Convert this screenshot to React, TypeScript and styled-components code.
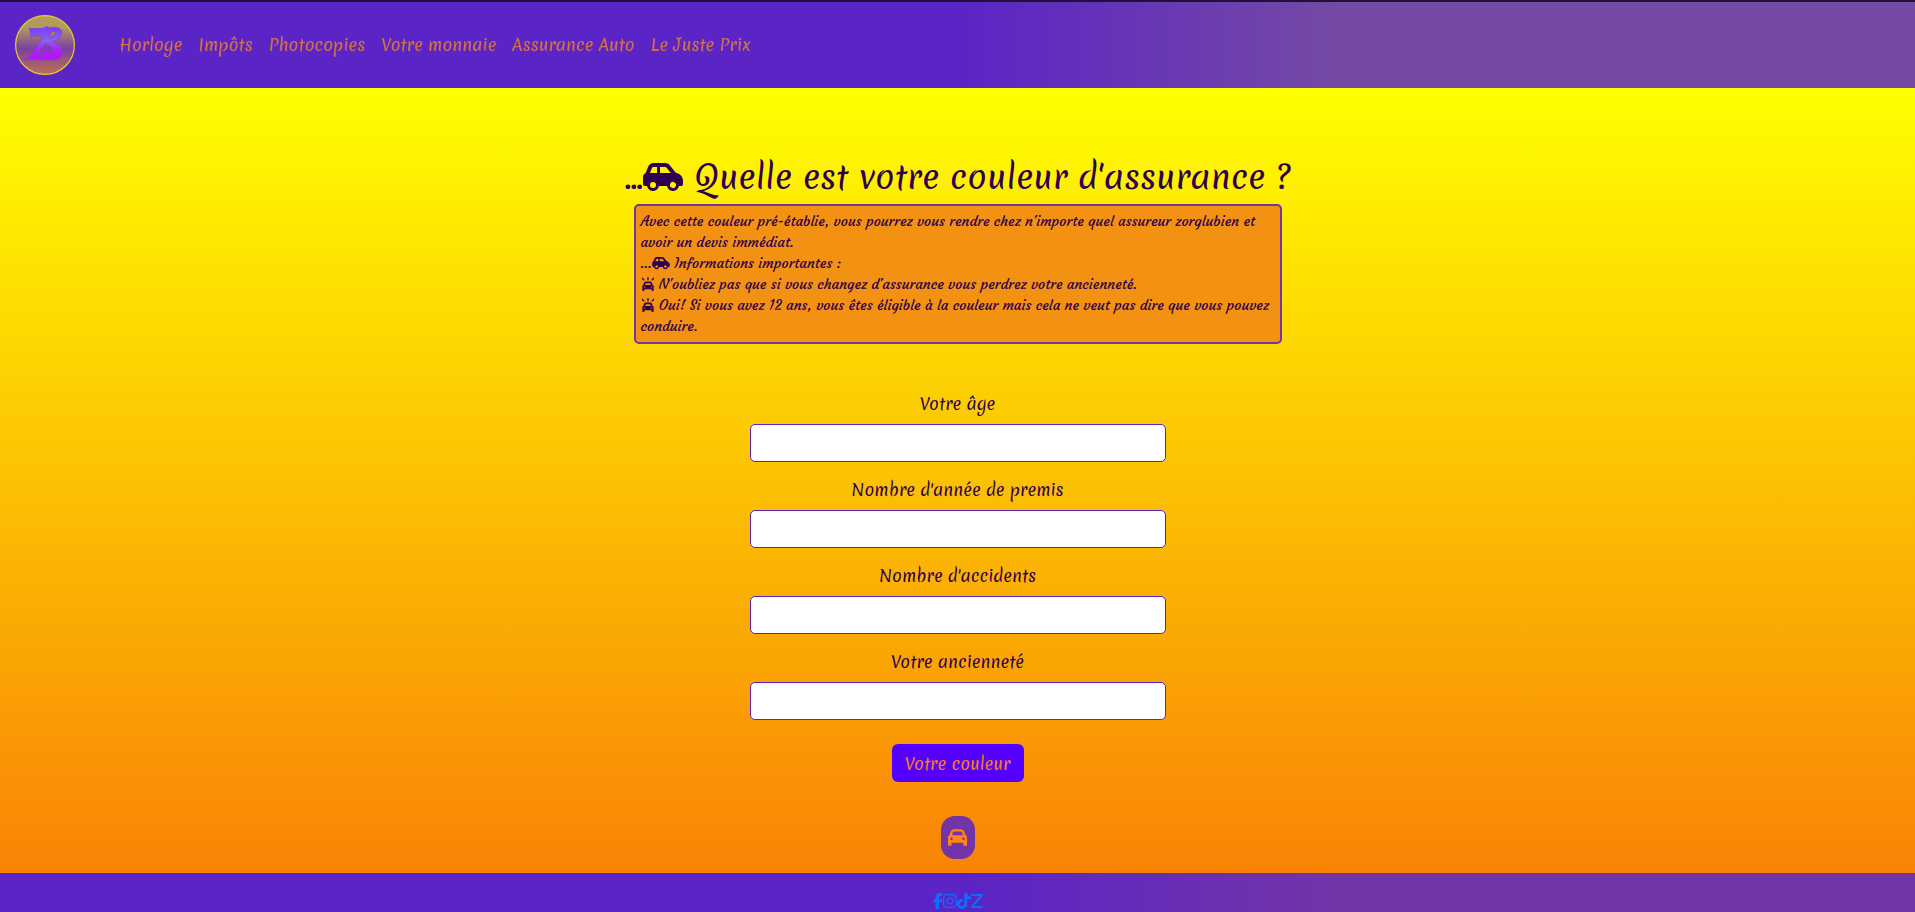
import React from "react";
import styled, { createGlobalStyle } from "styled-components";
import { FaCar, FaCarSide, FaCarOn, FaFacebookF, FaInstagram, FaTiktok, FaZ } from "react-icons/fa6";

const displayFont = `Merienda, "Open Sans", "Noto Sans", sans-serif`;
const bodyFont = `Courgette, Merienda, "Open Sans", sans-serif`;

const GlobalStyle = createGlobalStyle`
  * { box-sizing: border-box; }
  body { margin: 0; background: #5a24c6; color: #2e004f; font-family: ${displayFont}; }
`;

const Page = styled.div`
  min-height: 100vh;
  display: flex;
  flex-direction: column;
`;

const Header = styled.header`
  display: flex;
  align-items: center;
  gap: 44px;
  height: 88px;
  padding: 0 15px;
  border-top: 2px solid #22103a;
  background: linear-gradient(90deg, #5a24c6 50%, #744aa4 70%);
`;

const LogoLink = styled.a`
  display: block;
  line-height: 0;
`;

const Nav = styled.nav`
  display: flex;
  gap: 16px;
`;

const NavLink = styled.a`
  color: #d27341;
  font-size: 16px;
  line-height: 28px;
  text-decoration: none;
  white-space: nowrap;
`;

const Main = styled.main`
  flex: 1;
  display: flex;
  flex-direction: column;
  align-items: center;
  padding: 65px 16px 14px;
  background: linear-gradient(180deg, #ffff00, #f98306);
`;

const Title = styled.h1`
  margin: 0;
  padding-bottom: 3px;
  font-size: 32px;
  line-height: 48px;
  font-weight: 400;
  text-align: center;
  svg { width: 40px; height: 32px; vertical-align: -4px; }
`;

const Info = styled.section`
  width: 648px;
  max-width: 100%;
  min-height: 140px;
  padding: 5px;
  border: 2px solid #7334a8;
  border-radius: 5px;
  background: #f39212;
  font-family: ${bodyFont};
  font-size: 14px;
  line-height: 21px;
`;

const InfoLine = styled.p`
  margin: 0;
  svg { width: 14px; height: 14px; vertical-align: -2px; }
  svg.side { width: 18px; }
`;

const Form = styled.form`
  display: flex;
  flex-direction: column;
  align-items: center;
  width: 416px;
  max-width: 100%;
  margin-top: 46px;
`;

const Field = styled.div`
  display: flex;
  flex-direction: column;
  align-items: center;
  gap: 6px;
  width: 100%;
  margin-bottom: 14px;
`;

const Label = styled.label`
  font-size: 16px;
  line-height: 28px;
`;

const Input = styled.input`
  width: 100%;
  height: 38px;
  padding: 6px 12px;
  border: 1px solid #5a24c6;
  border-radius: 5px;
  background: #fff;
  font: inherit;
`;

const Submit = styled.button`
  width: 132px;
  height: 38px;
  margin-top: 10px;
  padding: 0;
  border: 0;
  border-radius: 6px;
  background: #5500ff;
  color: #f98306;
  font: inherit;
  font-size: 16px;
  white-space: nowrap;
`;

const Badge = styled.div`
  display: grid;
  place-items: center;
  width: 34px;
  height: 43px;
  margin-top: 34px;
  border-radius: 14px;
  background: #7334a8;
  color: #ff8412;
`;

const Footer = styled.footer`
  display: flex;
  justify-content: center;
  padding: 20px 0 3px;
  background: linear-gradient(90deg, #5a24c6 50%, #7334a8 70%);
`;

const SocialLink = styled.a<{ $width: number }>`
  display: block;
  color: #0d6efd;
  line-height: 0;
  svg { width: ${(p) => p.$width}px; height: 16px; }
`;

const Logo = () => (
  <svg width="60" height="60" viewBox="0 0 60 60" role="img" aria-label="ZB">
    <defs>
      <linearGradient id="disc" x1="0" y1="0" x2="0" y2="1">
        <stop offset="0.2" stopColor="#b39b5c" />
        <stop offset="0.56" stopColor="#7b419f" />
        <stop offset="0.95" stopColor="#b86a5a" />
      </linearGradient>
      <linearGradient id="mark" x1="0" y1="0" x2="0" y2="1">
        <stop offset="0" stopColor="#7838ff" />
        <stop offset="0.42" stopColor="#8b62f0" />
        <stop offset="0.72" stopColor="#b020ef" />
        <stop offset="1" stopColor="#b510f8" />
      </linearGradient>
    </defs>
    <circle cx="30" cy="30" r="29.4" fill="url(#disc)" stroke="#e5d027" strokeWidth="1.2" />
    <path
      fill="url(#mark)"
      stroke="#7538e8"
      strokeWidth="0.6"
      fillRule="evenodd"
      d="M14 13.200C19 14 25 13.400 30 13L31.400 11 33 12.800C39 11.500 46.500 12 46.700 17 46.700 22 42 25.500 38 26.500 43 29 47 32 47 37 47 42 43 44.500 37 44.800 28 45.200 18 43.500 9.500 45 13 43 15 41 17 38.200L28.500 21.500C24 20.500 19 20 15.200 22 16 19 15.500 16 14 13.200ZM36.500 17C35 19 34.500 21 35 23 38 22 41 19.500 40.500 17.500 39.500 16 37.500 16.200 36.500 17ZM30 28.500 23 39C25 39.500 26.500 40.500 28 41 26.500 37 29 34.500 31.500 33 31 36 34 36 34.500 39 35.500 37.500 35 35 33.500 33.500 36 33.500 38.500 36 38 40.500 40.500 37 38 32 30 28.500Z"
    />
  </svg>
);

const links = ["Horloge", "Impôts", "Photocopies", "Votre monnaie", "Assurance Auto", "Le Juste Prix"];

const fields = [
  { id: "age", label: "Votre âge" },
  { id: "permis", label: "Nombre d'année de premis" },
  { id: "accidents", label: "Nombre d'accidents" },
  { id: "anciennete", label: "Votre ancienneté" },
];

const socials = [
  { name: "Facebook", Icon: FaFacebookF, width: 10 },
  { name: "Instagram", Icon: FaInstagram, width: 14 },
  { name: "TikTok", Icon: FaTiktok, width: 14 },
  { name: "Z", Icon: FaZ, width: 12 },
];

export default function App() {
  return (
    <Page>
      <GlobalStyle />
      <Header>
        <LogoLink href="#"><Logo /></LogoLink>
        <Nav>
          {links.map((l) => <NavLink key={l} href="#">{l}</NavLink>)}
        </Nav>
      </Header>
      <Main>
        <Title>...<FaCarSide /> Quelle est votre couleur d'assurance ?</Title>
        <Info>
          <InfoLine>Avec cette couleur pré-établie, vous pourrez vous rendre chez n'importe quel assureur zorglubien et avoir un devis immédiat.</InfoLine>
          <InfoLine>...<FaCarSide className="side" /> Informations importantes :</InfoLine>
          <InfoLine><FaCarOn /> N'oubliez pas que si vous changez d'assurance vous perdrez votre ancienneté.</InfoLine>
          <InfoLine><FaCarOn /> Oui! Si vous avez 12 ans, vous êtes éligible à la couleur mais cela ne veut pas dire que vous pouvez conduire.</InfoLine>
        </Info>
        <Form onSubmit={(e) => e.preventDefault()}>
          {fields.map((f) => (
            <Field key={f.id}>
              <Label htmlFor={f.id}>{f.label}</Label>
              <Input id={f.id} type="text" />
            </Field>
          ))}
          <Submit type="submit">Votre couleur</Submit>
        </Form>
        <Badge><FaCar size={19} /></Badge>
      </Main>
      <Footer>
        {socials.map(({ name, Icon, width }) => (
          <SocialLink key={name} href="#" aria-label={name} $width={width}><Icon /></SocialLink>
        ))}
      </Footer>
    </Page>
  );
}
